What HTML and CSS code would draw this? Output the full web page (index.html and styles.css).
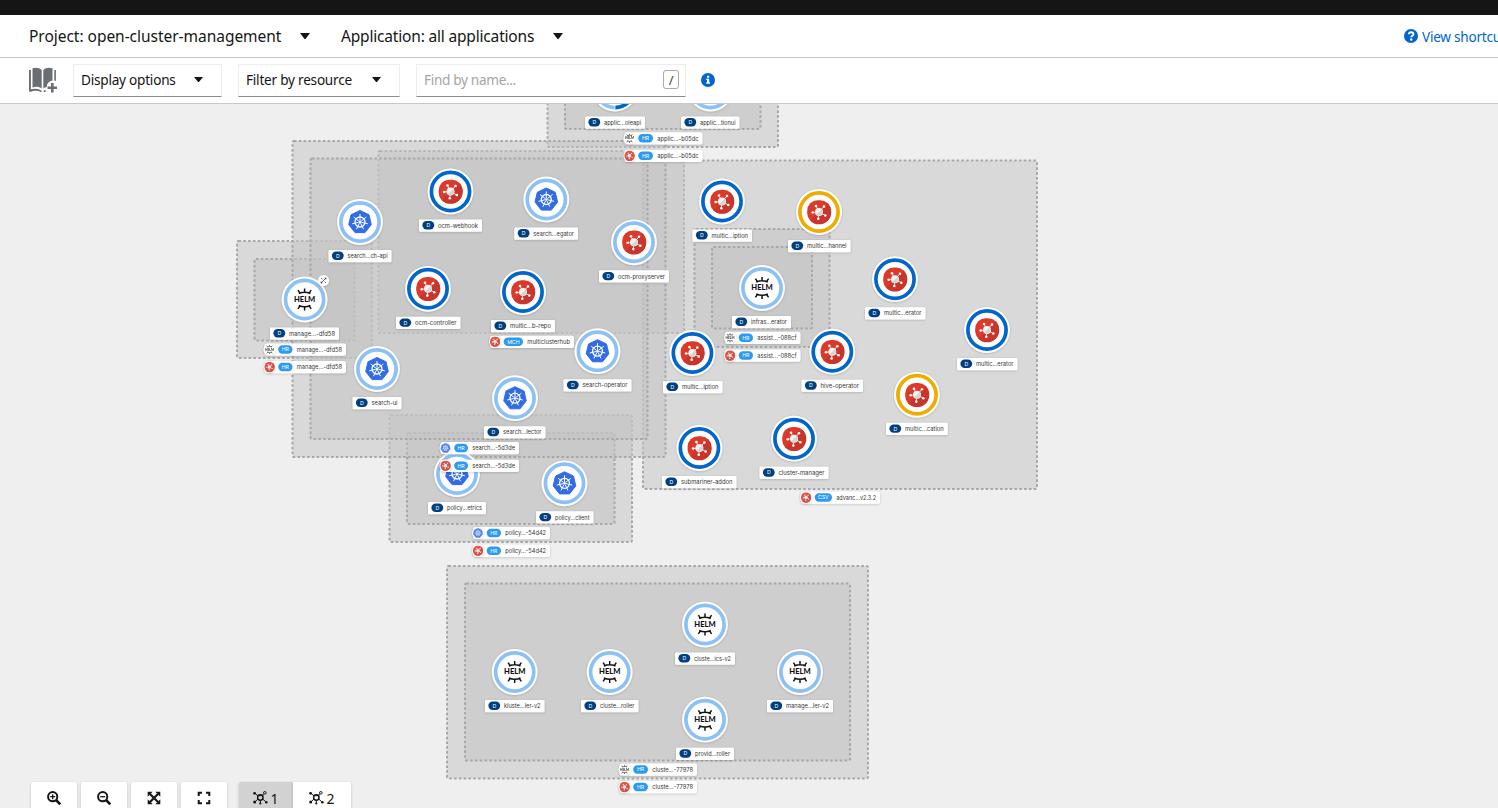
FILE: index.html
```html
<!DOCTYPE html>
<html lang="en">
<head>
<meta charset="utf-8">
<title>Topology</title>
<link rel="stylesheet" href="styles.css">
</head>
<body>
<div class="page">
  <header class="masthead"></header>
  <nav class="context-bar">
    <button class="context project"><span class="project-text">Project: open-cluster-management</span><i class="caret"></i></button>
    <button class="context application"><span class="application-text">Application: all applications</span><i class="caret"></i></button>
    <a class="shortcuts">
      <svg class="help" viewBox="0 0 14 14"><circle cx="7" cy="7" r="7" fill="#06c"/><path d="M4.8 5.3C4.9 3.9 5.8 3.2 7 3.2c1.400 0 2.400.8 2.400 2 0 1.600-2.100 1.600-2.100 3" fill="none" stroke="#fff" stroke-width="1.900"/><circle cx="7.200" cy="10.500" r="1.200" fill="#fff"/></svg>
      <span>View shortcuts</span>
    </a>
  </nav>
  <div class="toolbar">
    <svg class="book" viewBox="0 0 28 26">
      <g fill="#6a6e73">
        <path d="M3.500 1.200C7 0 10.500.8 12.700 3v18.500C10 19.700 7 19.300 3.500 20.500Z"/>
        <path d="M14.300 3C16.500.8 20 0 23.500 1.200V13.500c-3.500.5-5.500 2.500-5.800 6.500-1.200.2-2.300.8-3.400 1.500Z"/>
        <path d="M0 3h1.900v19.300c4-1 8-.8 11 1.700l-.6 1.200C8.500 23.300 5 23.500 1 25L0 24Z"/>
        <path d="M25.300 3h1.600v11l-1.600-.5ZM14.400 24l2-1.200.5 1.600-1.700.8Z"/>
        <path d="M22 16h2.600v3.400H28V22h-3.400v3.500H22V22h-3.500v-2.600H22Z"/>
      </g>
    </svg>
    <button class="select display"><span>Display options</span><i class="caret small"></i></button>
    <button class="select filter"><span>Filter by resource</span><i class="caret small"></i></button>
    <div class="search"><span>Find by name...</span><kbd>/</kbd></div>
    <svg class="info" viewBox="0 0 14 14"><circle cx="7" cy="7" r="7" fill="#06c"/><path d="M6 2.700h2.200v2H6ZM5.200 5.700h3v3.600H9v1.400H5.200V9.300H6V7h-.8Z" fill="#fff"/></svg>
  </div>
  <main class="canvas">
    <svg class="graph" viewBox="0 104 1498 704">
      <defs>
        <filter id="shadow" x="-30%" y="-30%" width="160%" height="170%"><feDropShadow dx="0" dy=".6" stdDeviation="1" flood-opacity=".2"/></filter>
        <g id="helm">
          <text class="helm-text" y="2.400" transform="scale(1.130 1)">HELM</text>
          <path d="M-5.800-6Q0-8.700 5.800-6M0-7v-4M-4.400-6.200l-2.200-3.200M4.400-6.200l2.200-3.200M-5.800 6Q0 8.700 5.800 6M0 7v4M-4.400 6.200l-2.200 3.200M4.400 6.200l2.200 3.200" fill="none" stroke="#111" stroke-width="1.500"/>
        </g>
        <g id="kube">
          <path d="M0-11.500 9-7.200 11.300 2.600 5 10.600H-5L-11.300 2.600-9-7.200Z" fill="#326ce5" stroke="#326ce5" stroke-linejoin="round" stroke-width="1"/>
          <g fill="none" stroke="#fff" stroke-width="1.300"><circle r="5"/><path d="M0-1.300V-8M1-.8 6.300-5M1.300.3 7.800 1.800M.6 1.200 3.500 7.200M-.6 1.200-3.500 7.200M-1.300.3-7.800 1.800M-1-.8-6.300-5" stroke-width="1"/></g>
          <circle r="1.200" fill="#fff"/>
        </g>
        <g id="acm">
          <rect x="-11.800" y="-11.800" width="23.600" height="23.600" rx="10.500" fill="#db3a2a"/>
          <path d="M8.700-8.700A12 12 0 0 1-8.700 8.700Z" fill="#c9352a"/>
          <path d="M0 0-3-6M0 0 5-5.500M0 0 6.300 3.500M0 0-.7 6.800M0 0-6.300.5" stroke="#fff" stroke-width=".8"/>
          <g fill="#fff"><circle cx="-3" cy="-6" r="1.300"/><circle cx="5" cy="-5.500" r="1.300"/><circle cx="6.300" cy="3.500" r="1.300"/><circle cx="-.7" cy="6.800" r="1.300"/><circle cx="-6.300" cy=".5" r="1.300"/><circle r="4" fill="#f5f5f5"/></g>
          <path d="M2.800-2.800A4 4 0 0 1-2.800 2.800Z" fill="#d5d5d5"/>
        </g>
      </defs>
      <g id="groups"></g>
      <g id="nodes"></g>
      <g id="group-labels"></g>
    </svg>
    <div class="controls">
      <button><svg viewBox="0 0 14 14"><g fill="none" stroke="#151515" stroke-width="2"><circle cx="5.700" cy="5.700" r="4.600"/><path d="m9 9 4.300 4.300" stroke-width="2.600"/><path d="M3.200 5.700h5M5.700 3.200v5" stroke-width="1.300"/></g></svg></button>
      <button><svg viewBox="0 0 14 14"><g fill="none" stroke="#151515" stroke-width="2"><circle cx="5.700" cy="5.700" r="4.600"/><path d="m9 9 4.300 4.300" stroke-width="2.600"/><path d="M3.200 5.700h5" stroke-width="1.300"/></g></svg></button>
      <button><svg viewBox="0 0 14 14"><path d="m3 3 8 8M11 3l-8 8" stroke="#151515" stroke-width="2.200"/><path d="M.7.700h5l-5 5ZM13.300.700v5l-5-5ZM.7 13.300v-5l5 5ZM13.300 13.300h-5l5-5Z" fill="#151515"/></svg></button>
      <button><svg viewBox="0 0 14 14"><path d="M1.700 5V1.700H5M9 1.700h3.300V5M12.300 9v3.300H9M5 12.300H1.700V9" fill="none" stroke="#151515" stroke-width="2"/></svg></button>
      <div class="layouts">
        <button class="active"><svg class="mesh" viewBox="0 0 15 14"><use href="#mesh"/></svg><span>1</span></button>
        <button><svg class="mesh" viewBox="0 0 15 14"><g id="mesh"><g fill="none" stroke="#151515" stroke-width="1"><circle cx="7.300" cy="6.500" r="2.700" stroke-width="1.500"/><path d="M5 5 2.300 2.500M9.300 4.500l1.500-1.700M5 8 2.300 10.500M9.700 8l2.800 2.500M7.300 9.500V12M4.500 4.700h5.800"/><circle cx="11.800" cy="1.800" r="1.300"/></g><g fill="#151515"><circle cx="1.600" cy="2.300" r="1.400"/><circle cx="1.700" cy="11" r="1.500"/><circle cx="7.300" cy="12.500" r="1.100"/><circle cx="13.300" cy="11.300" r="1.300"/></g></g></svg><span>2</span></button>
      </div>
    </div>
  </main>
</div>
<script src="topology.js"></script>
</body>
</html>
```
FILE: styles.css
```css
* { box-sizing: border-box; }
body { margin: 0; overflow: hidden; font-family: "Noto Sans", sans-serif; color: #151515; }
button { font: inherit; color: inherit; background: none; border: 0; padding: 0; margin: 0; letter-spacing: inherit; }
.page { display: flex; flex-direction: column; height: 808px; width: 1498px; overflow: hidden; }
.masthead { height: 15px; background: #151515; flex: none; }
.context-bar { display: flex; align-items: center; height: 43px; flex: none; padding-left: 29px; background: #fff; border-bottom: 1px solid #c8c8c8; font-size: 15.5px; white-space: nowrap; }
.context { display: flex; align-items: center; height: 42px; }
.project { width: 312px; }
.project-text { width: 271px; text-align: left; letter-spacing: -.03px; }
.application-text { width: 212px; text-align: left; letter-spacing: -.18px; }
.caret { width: 10px; height: 6px; background: #151515; clip-path: polygon(0 0, 100% 0, 55% 100%, 45% 100%); }
.caret.small { width: 9px; height: 5px; }
.shortcuts { display: flex; align-items: center; gap: 4px; width: 94px; margin-left: auto; color: #06c; font-size: 13.6px; letter-spacing: -.25px; }
.help, .info { width: 14px; height: 14px; flex: none; }
.toolbar { display: flex; align-items: center; height: 46px; flex: none; padding: 0 0 1px 29px; background: #fff; border-bottom: 1px solid #c8c8c8; font-size: 13.6px; letter-spacing: -.23px; }
.book { width: 28px; height: 26px; margin-right: 16px; }
.select, .search { display: flex; align-items: center; justify-content: space-between; height: 33px; border: 1px solid #ededed; border-bottom-color: #8a8d90; padding: 0 0 1px 7px; white-space: nowrap; }
.display { width: 149px; padding-right: 18px; margin-right: 16px; }
.filter { width: 162px; padding-right: 18px; margin-right: 16px; }
.search { width: 270px; padding-right: 6px; margin-right: 15px; color: #a5a5a5; letter-spacing: -.32px; }
kbd { display: flex; align-items: center; justify-content: center; width: 16px; height: 19px; border: 1px solid #aaa; border-radius: 3px; color: #444; font: 13px "Noto Sans", sans-serif; }
.canvas { position: relative; flex: 1; min-height: 0; background: #efefef; overflow: hidden; }
.graph { display: block; width: 1498px; height: 704px; }
.group { fill: #c3c3c3; fill-opacity: .5; stroke: #a8a8a8; stroke-width: 2; stroke-dasharray: 2.600 2.200; }
.node-bg, .label-bg { fill: #fff; filter: url(#shadow); }
.ring { fill: none; stroke-width: 3.700; }
.running { stroke: #06c; }
.idle { stroke: #8bc1f7; }
.warn { stroke: #f0ab00; }
.label-text { font: 6.200px Inter, sans-serif; fill: #333; }
.badge-d { fill: #004080; }
.badge-g { fill: #2b9af3; }
.badge-text { font: 5.200px Inter, sans-serif; fill: #fff; text-anchor: middle; }
.helm-text { font: 900 6.700px Lato, sans-serif; text-anchor: middle; fill: #111; }
.controls { position: absolute; left: 31px; top: 678px; display: flex; gap: 4px; }
.controls button { display: flex; align-items: center; justify-content: center; width: 46px; height: 32px; background: #fff; border-radius: 2px; box-shadow: 0 1px 3px rgba(0, 0, 0, .2); font-size: 14px; }
.controls svg { width: 14px; height: 14px; }
.layouts { display: flex; margin-left: 8px; }
.controls .layouts button { width: 58px; gap: 2px; border-radius: 0 2px 2px 0; }
.controls .layouts .active { width: 54px; background: #d2d2d2; border-radius: 2px 0 0 2px; }
.controls .mesh { width: 15px; }
```
FILE: topology.js
```js
// Group outlines in paint order: [left, top, right, bottom]
const groups = [
  [378.5, 151, 684, 333], [643, 160.5, 1037, 489],
  [547.5, 60, 778, 147], [565, 78, 760.5, 129],
  [237, 241, 372, 358], [254.5, 259, 354.5, 340.5],
  [389.500, 415, 632, 542], [407, 433, 614.5, 524],
  [292.5, 141, 665.5, 457], [310.5, 158.5, 647.5, 439],
  [694.500, 229, 829.5, 347], [712, 247, 812, 328.5],
  [447, 566, 868, 778.5], [465, 583.5, 850, 760.5]
];

// [cx, cy, icon, status, label, labelLeft, labelRight]
const nodes = [
  [615, 88.5, 'kube', 'idle', 'applic...oleapi', 585, 645],
  [710.5, 88.5, 'kube', 'idle', 'applic...tionui', 681, 739.5],
  [360, 222, 'kube', 'idle', 'search...ch-api', 328.5, 391.5],
  [450.5, 191.5, 'acm', 'running', 'ocm-webhook', 419, 482],
  [546.3, 199.5, 'kube', 'idle', 'search...egator', 514.3, 578],
  [634, 242.3, 'acm', 'idle', 'ocm-proxyserver', 599, 669],
  [428, 288.8, 'acm', 'running', 'ocm-controller', 396, 460.5],
  [523, 292, 'acm', 'running', 'multic...b-repo', 491, 555],
  [304.6, 299.5, 'helm', 'idle', 'manage...-dfd58', 270, 339],
  [597.5, 351.2, 'kube', 'idle', 'search-operator', 563.5, 631.5],
  [377, 369, 'kube', 'idle', 'search-ui', 352.5, 401.5],
  [515, 398.2, 'kube', 'idle', 'search...lector', 484, 545.5],
  [457, 474, 'kube', 'idle', 'policy...etrics', 428, 486],
  [564.5, 483.3, 'kube', 'idle', 'policy...client', 536, 593.5],
  [722, 201.5, 'acm', 'running', 'multic...iption', 692.5, 752],
  [819, 212, 'acm', 'warn', 'multic...hannel', 788, 850.5],
  [762, 288, 'helm', 'idle', 'infras...erator', 732, 791],
  [895, 279.200, 'acm', 'running', 'multic...erator', 865, 925.5],
  [987, 330, 'acm', 'running', 'multic...erator', 957, 1017.5],
  [832.3, 351.7, 'acm', 'running', 'hive-operator', 801.5, 863],
  [692.4, 353, 'acm', 'running', 'multic...iption', 663, 722.5],
  [917, 394.8, 'acm', 'warn', 'multic...cation', 886, 947.8],
  [699.4, 448, 'acm', 'running', 'submariner-addon', 662, 736.5],
  [794, 438.7, 'acm', 'running', 'cluster-manager', 759.5, 828.5],
  [514.700, 672, 'helm', 'idle', 'kluste...ler-v2', 485, 544.5],
  [609.7, 672, 'helm', 'idle', 'cluste...roller', 581, 638.5],
  [705, 624.5, 'helm', 'idle', 'cluste...ics-v2', 675, 735],
  [800, 672, 'helm', 'idle', 'manage...ler-v2', 767, 833],
  [705, 719.7, 'helm', 'idle', 'provid...roller', 676, 734]
];

// [iconX, cy, icon, badge, badgeRight, label, right]
const groupLabels = [
  [629.5, 138.3, 'helm', 'HR', 653, 'applic...-b05dc', 702.5],
  [629.5, 155.8, 'acm', 'HR', 653, 'applic...-b05dc', 702.5],
  [269.5, 349.5, 'helm', 'HR', 292.5, 'manage...-dfd58', 346],
  [269.5, 367, 'acm', 'HR', 292.5, 'manage...-dfd58', 346],
  [495, 341.7, 'acm', 'MCH', 523, 'multiclusterhub', 574],
  [730, 337.8, 'helm', 'HR', 753, 'assist...-088cf', 800.5],
  [730, 355.5, 'acm', 'HR', 753, 'assist...-088cf', 800.5],
  [445.5, 448, 'kube', 'HR', 468, 'search...-5d3de', 519],
  [445.5, 465.7, 'acm', 'HR', 468, 'search...-5d3de', 519],
  [478, 533, 'kube', 'HR', 501, 'policy...-54d42', 550],
  [478, 550.700, 'acm', 'HR', 501, 'policy...-54d42', 550],
  [806, 497.5, 'acm', 'CSV', 832, 'advanc...v2.3.2', 880],
  [624.500, 769.5, 'helm', 'HR', 648, 'cluste...-77978', 697],
  [624.500, 787, 'acm', 'HR', 648, 'cluste...-77978', 697]
];

const fit = (x, right, y, label) =>
  `<text class="label-text" x="${x}" y="${y + 2.2}" textLength="${right - x}" lengthAdjust="spacingAndGlyphs">${label}</text>`;

const pill = (x, right, cy, text, kind) =>
  `<rect class="badge-${kind}" x="${x}" y="${cy - 4.2}" width="${right - x}" height="8.4" rx="4.2"/>` +
  `<text class="badge-text" x="${(x + right) / 2}" y="${cy + 1.9}">${text}</text>`;

document.getElementById('groups').innerHTML = groups.map(([l, t, r, b]) =>
  `<rect class="group" x="${l}" y="${t}" width="${r - l}" height="${b - t}" rx="1.5"/>`).join('');

document.getElementById('nodes').innerHTML = nodes.map(([cx, cy, icon, status, label, l, r]) => {
  const y = cy + 34;
  return `<circle class="node-bg" cx="${cx}" cy="${cy}" r="22.9"/>` +
    `<circle class="ring ${status}" cx="${cx}" cy="${cy}" r="19.1"/>` +
    `<use href="#${icon}" x="${cx}" y="${cy}"/>` +
    `<rect class="label-bg" x="${l}" y="${y - 6}" width="${r - l}" height="12.2" rx="1.2"/>` +
    pill(l + 3.4, l + 15.2, y - 0.2, 'D', 'd') + fit(l + 19, r - 4, y, label);
}).join('') +
  '<path class="ring running" d="M615 107.600A19.1 19.1 0 0 0 634.100 88.500"/>' +
  '<path d="M615 105v5" stroke="#fff" stroke-width=".7"/>' +
  '<circle class="node-bg" cx="323.500" cy="280.500" r="5.600"/>' +
  '<path d="M321 278l1.500 1.500M326 283l-1.500-1.500M326 278l-5 5M324.500 278H326v1.500M321 281.500V283h1.500" fill="none" stroke="#333" stroke-width=".7"/>';

document.getElementById('group-labels').innerHTML = groupLabels.map(([x, cy, icon, badge, br, label, r]) =>
  `<rect class="label-bg" x="${x - 5}" y="${cy - 6}" width="${r - x + 5}" height="12.2" rx="2"/>` +
  `<circle class="node-bg" cx="${x}" cy="${cy}" r="6"/>` +
  `<use href="#${icon}" opacity=".85" transform="translate(${x} ${cy}) scale(.42)"/>` +
  pill(x + 8.700, br, cy, badge, 'g') + fit(br + 4.3, r - 4, cy, label)).join('');
```
